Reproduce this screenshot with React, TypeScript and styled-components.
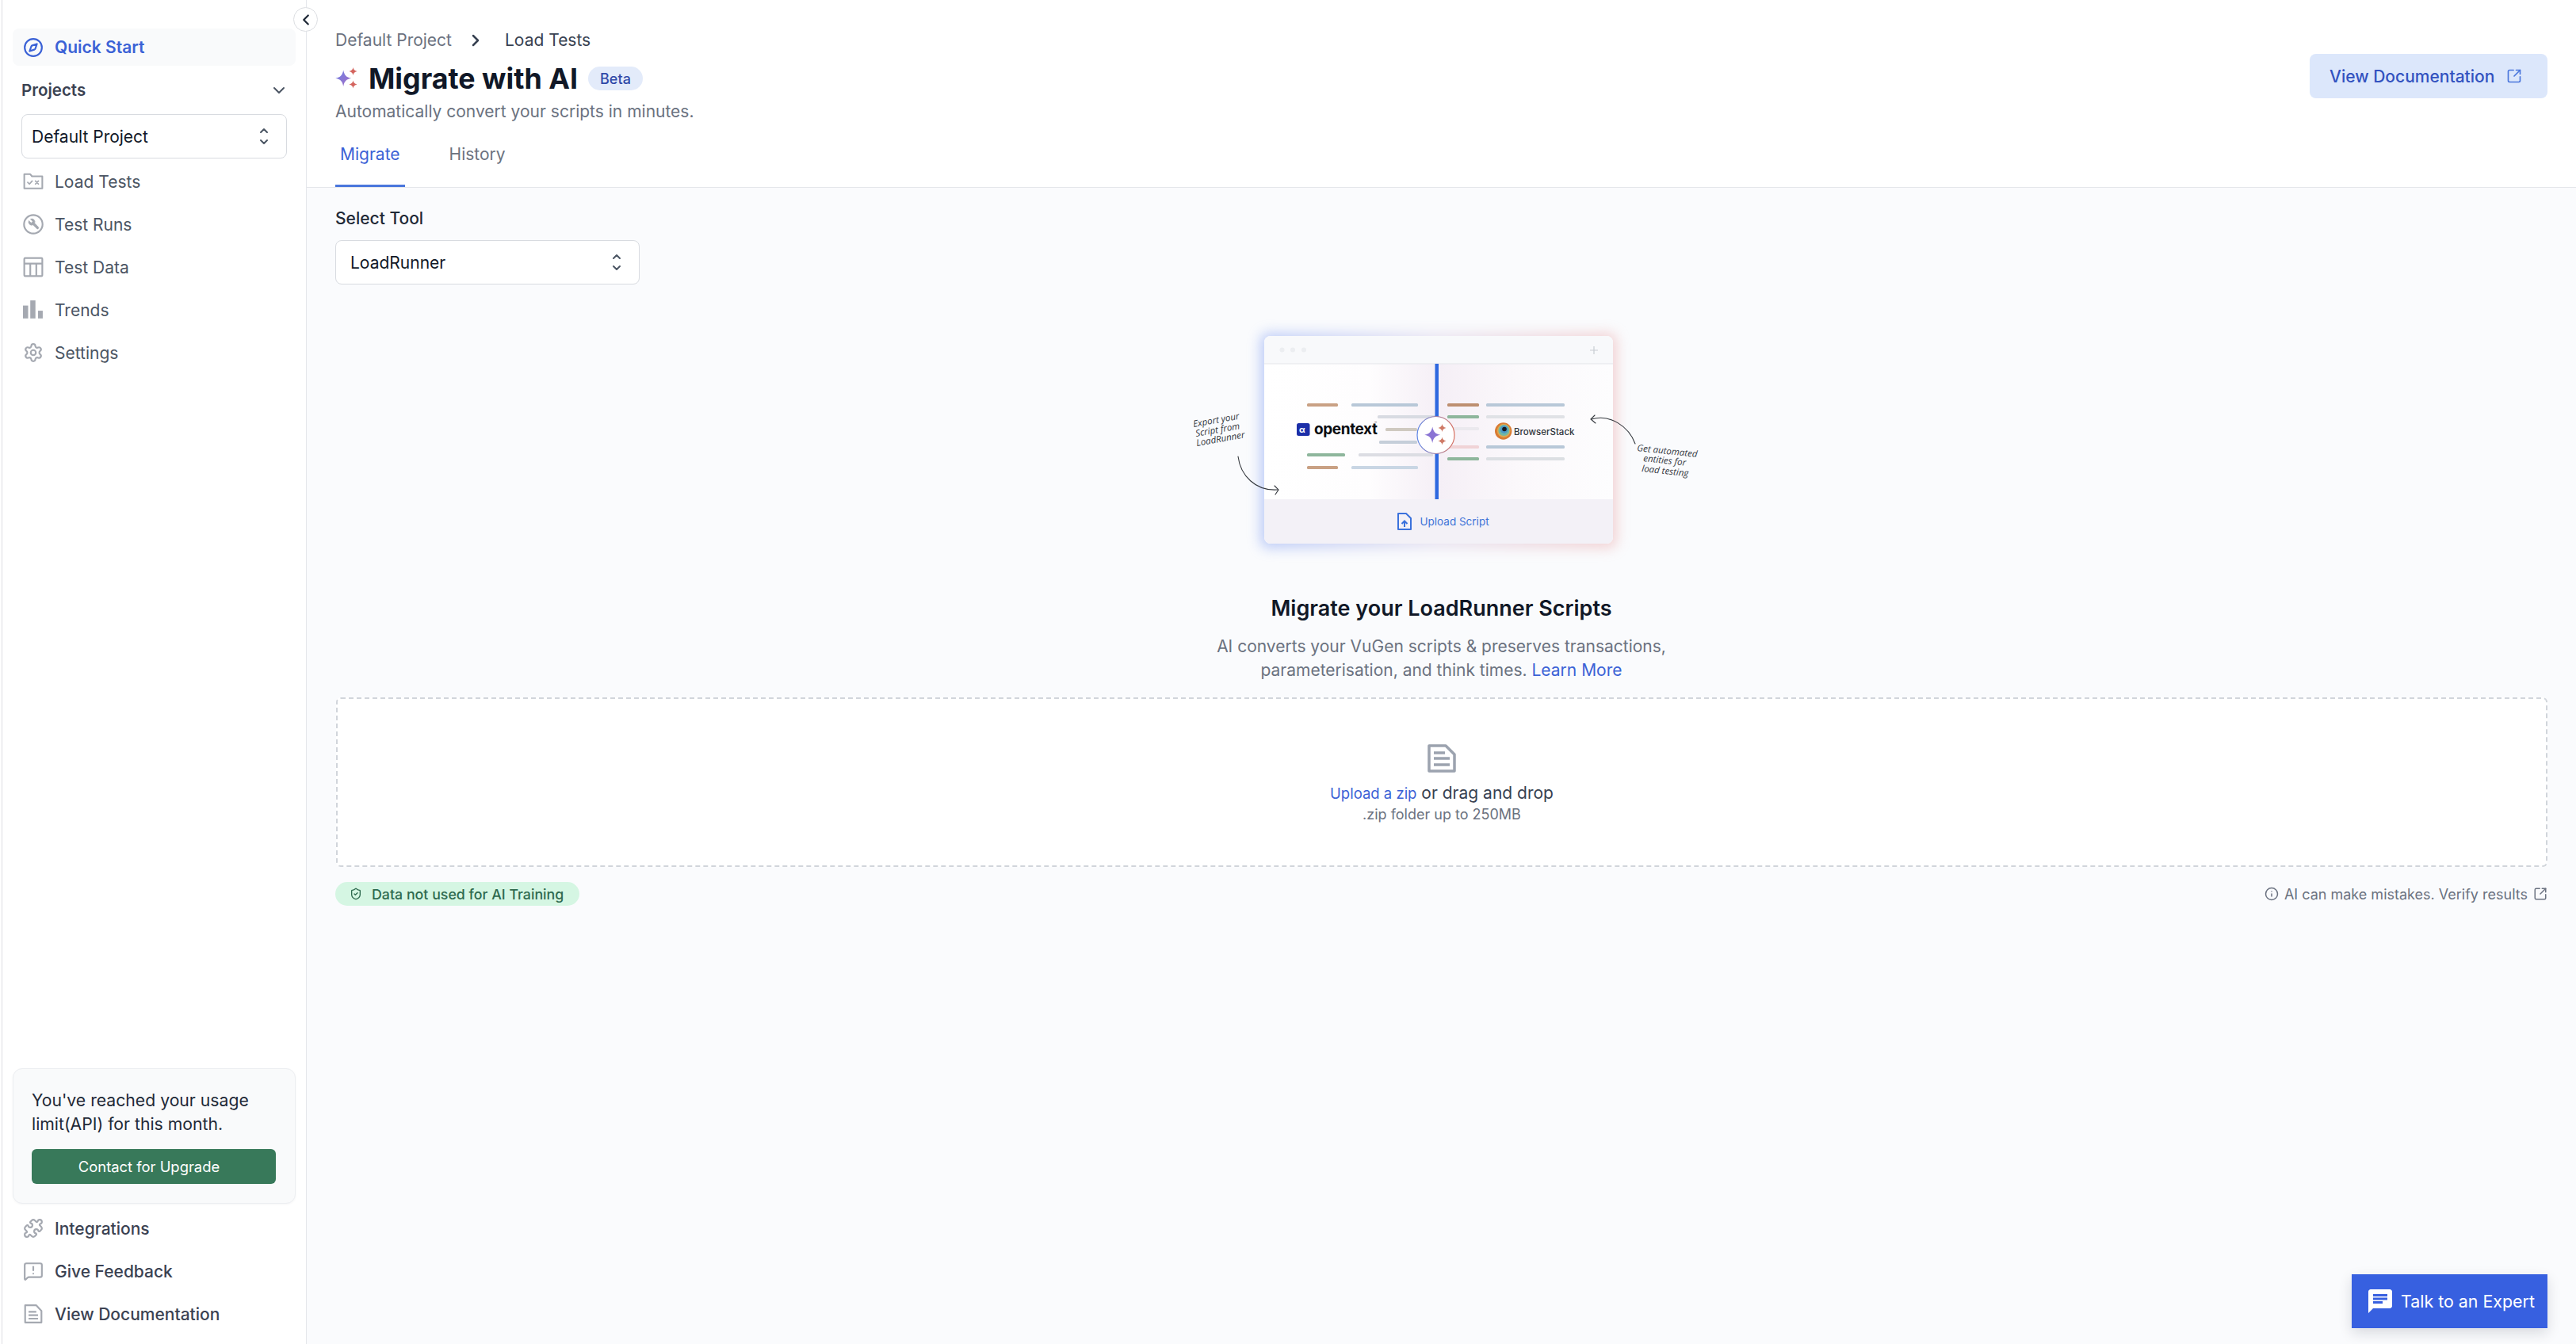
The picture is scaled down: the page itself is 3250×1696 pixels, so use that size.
import React from 'react';
import styled, { createGlobalStyle } from 'styled-components';
import {
    ChevronDown,
    ChevronLeft,
    ChevronRight,
    Compass,
    Info,
    MessageSquareWarning,
    Puzzle,
    Settings,
    ShieldCheck,
    SquareArrowOutUpRight,
} from 'lucide-react';
import { MdChat } from 'react-icons/md';

// STYLE
const GlobalStyle = createGlobalStyle`
    * {
        box-sizing: border-box;
    }
    body {
        margin: 0;
        font-family: Inter, 'Noto Sans', sans-serif;
        color: #111827;
        background: #fff;
    }
`;

const Page = styled.div`
    position: relative;
    display: grid;
    grid-template-columns: 387px 1fr;
    height: 100vh;
    overflow: hidden;
`;

const Sider = styled.aside`
    position: relative;
    display: flex;
    flex-direction: column;
    justify-content: space-between;
    margin-left: 2px;
    padding: 36px 13px 11px;
    border-left: 1px solid #dcdee2;
    border-right: 1px solid #e5e7eb;
    background: #fff;
`;

const CollapseButton = styled.button`
    position: absolute;
    top: 9px;
    right: -15px;
    z-index: 5;
    display: flex;
    align-items: center;
    justify-content: center;
    width: 31px;
    height: 31px;
    padding: 0;
    border: 1px solid #dcdee2;
    border-radius: 50%;
    background: #fff;
    color: #1f2937;
`;

const SiderGroup = styled.div`
    display: flex;
    flex-direction: column;
`;

const NavItem = styled.div<{ $active?: boolean; $strong?: boolean }>`
    display: flex;
    align-items: center;
    gap: 14px;
    height: ${(p) => (p.$active ? 47 : 54)}px;
    padding-left: 13px;
    border-radius: 8px;
    font-size: 21px;
    font-weight: ${(p) => (p.$active ? 600 : p.$strong ? 500 : 400)};
    color: ${(p) => (p.$active ? '#3b62d6' : p.$strong ? '#3b4252' : '#4b5563')};
    background: ${(p) => (p.$active ? '#f9fafb' : 'transparent')};
    svg {
        flex: none;
        width: 26px;
        height: 26px;
        color: ${(p) => (p.$active ? '#3b62d6' : '#a5a9b1')};
    }
`;

const ProjectsRow = styled.div`
    display: flex;
    align-items: center;
    justify-content: space-between;
    height: 61px;
    padding: 0 9px 0 11px;
    font-size: 20.5px;
    font-weight: 600;
    color: #3b4252;
    svg {
        width: 24px;
        height: 24px;
        color: #4b5563;
    }
`;

const SelectBox = styled.div<{ $width: number; $inset: number }>`
    display: flex;
    align-items: center;
    justify-content: space-between;
    width: ${(p) => p.$width}px;
    height: 56px;
    padding: 0 22px 0 ${(p) => p.$inset}px;
    border: 1.5px solid #d8dbe0;
    border-radius: 8px;
    background: #fff;
    font-size: 21px;
    color: #111827;
`;

const ProjectSelect = styled(SelectBox)`
    margin: 0 0 2px 11px;
`;

const UsageCard = styled.div`
    margin-bottom: 4px;
    padding: 24px 24px 24px 23px;
    border: 1.5px solid #eceef1;
    border-radius: 12px;
    background: #f9fafb;
    box-shadow: 0 1px 3px rgba(17, 24, 39, 0.04);
`;

const UsageText = styled.p`
    margin: 0 0 17px;
    font-size: 21.2px;
    line-height: 30px;
    color: #1f2937;
`;

const UpgradeButton = styled.button`
    display: block;
    width: 100%;
    height: 44px;
    padding: 0 12px 0 0;
    border: 0;
    border-radius: 6px;
    background: #38795a;
    color: #fff;
    font-family: inherit;
    font-size: 18.4px;
    font-weight: 400;
`;

const Main = styled.main`
    display: flex;
    flex-direction: column;
    min-width: 0;
    background: #fafbfd;
`;

const PageHeader = styled.header`
    display: flex;
    justify-content: space-between;
    height: 237px;
    padding: 36px 36px 0;
    border-bottom: 1.5px solid #e5e7eb;
    background: #fff;
`;

const HeaderLeft = styled.div`
    display: flex;
    flex-direction: column;
`;

const Breadcrumb = styled.div`
    display: flex;
    align-items: center;
    height: 30px;
    font-size: 21px;
    color: #6b7280;
    svg {
        width: 24px;
        height: 24px;
        margin: 0 25px 0 18px;
        color: #374151;
    }
`;

const Crumb = styled.span`
    color: #374151;
`;

const TitleRow = styled.div`
    display: flex;
    align-items: center;
    height: 44px;
    margin-top: 12px;
`;

const Title = styled.h1`
    margin: 0 13px 0 14px;
    font-size: 35.8px;
    font-weight: 700;
    line-height: 44px;
    color: #111827;
`;

const BetaPill = styled.span`
    display: flex;
    align-items: center;
    justify-content: center;
    width: 69px;
    height: 30px;
    border-radius: 15px;
    background: #e3ebfa;
    font-size: 18px;
    font-weight: 500;
    color: #3049a8;
`;

const Subtitle = styled.div`
    margin-top: 5px;
    font-size: 21px;
    line-height: 30px;
    color: #6b7280;
`;

const Tabs = styled.nav`
    display: flex;
    gap: 50px;
    margin-top: 8px;
`;

const Tab = styled.div<{ $active?: boolean }>`
    height: 72px;
    padding: 16px 6px 0;
    border-bottom: 3px solid ${(p) => (p.$active ? '#4a76dc' : 'transparent')};
    font-size: 21px;
    line-height: 30px;
    color: ${(p) => (p.$active ? '#3b62d6' : '#6b7280')};
`;

const DocsButton = styled.button`
    display: flex;
    align-items: center;
    gap: 15px;
    width: 300px;
    height: 56px;
    margin-top: 32px;
    padding: 0 0 0 25px;
    border: 0;
    border-radius: 8px;
    background: #dce7fb;
    color: #3252c0;
    font-family: inherit;
    font-size: 21px;
    font-weight: 500;
    white-space: nowrap;
    svg {
        flex: none;
        width: 20px;
        height: 20px;
        color: #4a76dc;
    }
`;

const Content = styled.section`
    display: flex;
    flex-direction: column;
    padding: 24px 36px 0;
`;

const FieldLabel = styled.label`
    margin-bottom: 12px;
    font-size: 21px;
    font-weight: 500;
    line-height: 30px;
    color: #1f2937;
`;

const Hero = styled.div`
    display: flex;
    flex-direction: column;
    align-items: center;
    margin-top: 41px;
`;

const HeroArt = styled.svg`
    display: block;
    width: 677px;
    height: 320px;
`;

const HeroTitle = styled.h2`
    margin: 30px 0 15px;
    font-size: 27px;
    font-weight: 600;
    line-height: 36px;
    color: #111827;
`;

const HeroText = styled.p`
    margin: 0;
    text-align: center;
    font-size: 21px;
    line-height: 30px;
    color: #6b7280;
`;

const TextLink = styled.a`
    color: #3b62d6;
`;

const DropZone = styled.div`
    display: flex;
    flex-direction: column;
    align-items: center;
    height: 214px;
    margin: 19px 0 19px 1px;
    padding-top: 57px;
    border: 2.5px dashed #d1d5db;
    border-radius: 6px;
    background: #fff;
`;

const DropLine = styled.div`
    margin-top: 11px;
    font-size: 21px;
    line-height: 30px;
    color: #374151;
    a {
        font-size: 18.5px;
    }
`;

const DropHint = styled.div`
    font-size: 18px;
    line-height: 24px;
    color: #6b7280;
`;

const NoticeRow = styled.div`
    display: flex;
    align-items: center;
    justify-content: space-between;
`;

const TrainingPill = styled.div`
    display: flex;
    align-items: center;
    gap: 12px;
    width: 308px;
    height: 30px;
    padding-left: 18px;
    border-radius: 15px;
    background: #d5f6e3;
    font-size: 17.8px;
    font-weight: 500;
    color: #2f6a4f;
    white-space: nowrap;
    svg {
        flex: none;
        width: 16px;
        height: 16px;
    }
`;

const Disclaimer = styled.div`
    display: flex;
    align-items: center;
    gap: 7px;
    font-size: 18px;
    color: #6b7280;
    svg {
        width: 18px;
        height: 18px;
    }
`;

const TalkButton = styled.button`
    position: absolute;
    right: 36px;
    bottom: 20px;
    display: flex;
    align-items: center;
    gap: 8px;
    width: 247px;
    height: 68px;
    padding: 0 0 0 18px;
    border: 0;
    background: #3760e0;
    color: #fff;
    font-family: inherit;
    font-size: 21.4px;
    white-space: nowrap;
    box-shadow: 0 6px 16px rgba(17, 24, 39, 0.14);
    svg {
        flex: none;
        width: 36px;
        height: 36px;
    }
`;

// ICONS
const UpDown = () => (
    <svg width="12" height="22" viewBox="0 0 12 22" fill="none" stroke="#4b5563" strokeWidth="2" strokeLinecap="round" strokeLinejoin="round">
        <path d="M2 6 6 2 10 6" />
        <path d="M2 16 6 20 10 16" />
    </svg>
);

const FolderChecks = () => (
    <svg viewBox="0 0 24 24" fill="none" stroke="currentColor" strokeWidth="1.9" strokeLinecap="round" strokeLinejoin="round">
        <path d="M1.5 20V3.5h7l2 2.5h12v14z" />
        <path d="M5.5 13l2 2 3.2-3.6" strokeWidth="1.6" />
        <path d="M14.5 11.5l3.5 3.5M18 11.5L14.5 15" strokeWidth="1.6" />
    </svg>
);

const WrenchCircle = () => (
    <svg viewBox="0 0 24 24" fill="none" stroke="currentColor" strokeWidth="2">
        <circle cx="12" cy="12" r="10.8" />
        <path
            d="M14.7 6.3a1 1 0 0 0 0 1.4l1.6 1.6a1 1 0 0 0 1.4 0l3.77-3.77a6 6 0 0 1-7.94 7.94l-6.91 6.91a2.12 2.12 0 0 1-3-3l6.91-6.91a6 6 0 0 1 7.94-7.94l-3.76 3.76z"
            transform="translate(19.5 5) scale(-0.62 0.62) translate(-1 -1)"
            fill="currentColor"
            strokeWidth="1"
        />
    </svg>
);

const TableGrid = () => (
    <svg viewBox="0 0 24 24" fill="none" stroke="currentColor" strokeWidth="2">
        <rect x="1.5" y="1.5" width="21" height="21" rx="1" />
        <path d="M1.5 8h21M8.5 8v14.5M15.5 8v14.5" />
    </svg>
);

const BarsIcon = () => (
    <svg viewBox="0 0 24 24" fill="currentColor">
        <rect x="0" y="7" width="6" height="15" />
        <rect x="8.5" y="1" width="6" height="21" />
        <rect x="17.5" y="13" width="5.5" height="9" />
    </svg>
);

const DocIcon = () => (
    <svg viewBox="0 0 24 24" fill="none" stroke="currentColor" strokeWidth="2" strokeLinejoin="round">
        <path d="M2.5 2h13l6 6.5V22h-19z" />
        <path d="M6.5 9.5h9M6.5 13.5h11M6.5 17.5h11" />
    </svg>
);

const BIG_STAR = 'M10.2 3.5c1.2 6.4 3.6 9 10 10.2-6.4 1.2-8.8 3.8-10 10.2-1.2-6.4-3.6-9-10-10.2 6.4-1.2 8.8-3.8 10-10.2z';
const TOP_STAR = 'M22.5 0c.6 3 1.8 4.2 5 5-3.2.8-4.4 2-5 5-.6-3-1.8-4.2-5-5 3.2-.8 4.4-2 5-5z';
const LOW_STAR = 'M22.5 16.5c.6 3 1.8 4.2 5 5-3.2.8-4.4 2-5 5-.6-3-1.8-4.2-5-5 3.2-.8 4.4-2 5-5z';

const Sparkle = () => (
    <svg width="28" height="28" viewBox="0 0 28 28">
        <defs>
            <linearGradient id="sparkleMain" x1="0" y1="0" x2="1" y2="1">
                <stop offset="0" stopColor="#6d83e6" />
                <stop offset="1" stopColor="#a56cc4" />
            </linearGradient>
        </defs>
        <path d={BIG_STAR} fill="url(#sparkleMain)" />
        <path d={TOP_STAR} fill="#d4655f" />
        <path d={LOW_STAR} fill="#d4655f" />
    </svg>
);

const BigFile = () => (
    <svg width="36" height="36" viewBox="0 0 36 36" fill="none" stroke="#9ca3af" strokeWidth="3.5" strokeLinejoin="round">
        <path d="M2 2h21l11 11v21H2z" />
        <path d="M8 11h14M8 18h20M8 26h20" />
    </svg>
);

// One code line of the illustration
const artLines: [number, number, number, string][] = [
    [1649, 1688, 511, '#c9a184'],
    [1705, 1789, 511, '#b8c8d8'],
    [1738, 1812, 526, '#d8dbe2'],
    [1748, 1788, 542, '#cfc9c0'],
    [1740, 1788, 558, '#c5ced9'],
    [1649, 1697, 574, '#8eb69c'],
    [1714, 1808, 574, '#dcdde3'],
    [1649, 1688, 590, '#c9a184'],
    [1705, 1789, 590, '#c9d6e4'],
    [1826, 1866, 511, '#bd8f70'],
    [1875, 1974, 511, '#b8c8d8'],
    [1826, 1866, 526, '#8eb69c'],
    [1875, 1974, 526, '#e0e2e6'],
    [1826, 1866, 541, '#ebe9ee'],
    [1826, 1866, 564, '#f0d3d6'],
    [1875, 1974, 564, '#b8c8d8'],
    [1826, 1866, 579, '#8eb69c'],
    [1875, 1974, 579, '#dcdfe3'],
];

const Illustration = () => (
    <HeroArt viewBox="1480 400 677 320">
        <defs>
            <linearGradient id="glow" x1="0" y1="0" x2="1" y2="0">
                <stop offset="0" stopColor="#7f9df2" />
                <stop offset="0.5" stopColor="#d9cfe6" />
                <stop offset="1" stopColor="#eba9a9" />
            </linearGradient>
            <linearGradient id="pane" x1="0" y1="0" x2="1" y2="0">
                <stop offset="0" stopColor="#fff" />
                <stop offset="0.3" stopColor="#fefdfe" />
                <stop offset="0.5" stopColor="#f5eff6" />
                <stop offset="0.72" stopColor="#fbf8fb" />
                <stop offset="1" stopColor="#fdfdfe" />
            </linearGradient>
            <linearGradient id="ring" x1="0" y1="0" x2="1" y2="0">
                <stop offset="0" stopColor="#5f86e6" />
                <stop offset="1" stopColor="#d8705f" />
            </linearGradient>
            <filter id="soft" x="-20%" y="-20%" width="140%" height="140%">
                <feGaussianBlur stdDeviation="8" />
            </filter>
            <filter id="tiny">
                <feGaussianBlur stdDeviation="0.5" />
            </filter>
            <clipPath id="win">
                <rect x="1595" y="424" width="440" height="262" rx="8" />
            </clipPath>
        </defs>
        <rect x="1590" y="420" width="450" height="272" rx="10" fill="url(#glow)" filter="url(#soft)" opacity="0.5" />
        <g clipPath="url(#win)">
            <rect x="1595" y="424" width="440" height="262" fill="#fff" />
            <rect x="1595" y="424" width="440" height="35" fill="#f8f9fb" />
            <rect x="1595" y="459" width="440" height="171" fill="url(#pane)" />
            <rect x="1595" y="630" width="440" height="56" fill="#f3f1f7" />
            <rect x="1595" y="458.5" width="440" height="1" fill="#e3e5ea" />
        </g>
        <g fill="#eceef1">
            <circle cx="1617.5" cy="441.5" r="3" />
            <circle cx="1631" cy="441.5" r="3" />
            <circle cx="1645" cy="441.5" r="3" />
        </g>
        <path d="M2011 437v10M2006 442h10" stroke="#c9cdd3" strokeWidth="1.2" />
        <g filter="url(#tiny)">
            {artLines.map(([x1, x2, y, color]) => (
                <rect key={`${x1}-${y}`} x={x1} y={y - 2} width={x2 - x1} height={4} rx={1.5} fill={color} />
            ))}
            <rect x="1810.5" y="459" width="4.5" height="171" fill="#2f68df" />
        </g>
        <circle cx="1811.5" cy="549" r="23.5" fill="#fff" stroke="url(#ring)" strokeWidth="1.2" />
        <g transform="translate(1797 535)">
            <path d={BIG_STAR} fill="#8a74d4" />
            <path d={TOP_STAR} fill="#cf7a66" />
            <path d={LOW_STAR} fill="#cf7a66" />
        </g>
        <rect x="1636" y="534" width="16.5" height="16" rx="2.5" fill="#1c2fa8" />
        <text x="1639" y="546" fontFamily="Inter" fontSize="11" fontWeight="700" fill="#fff">α</text>
        <text x="1658" y="547.5" fontFamily="Inter" fontSize="19" fontWeight="700" letterSpacing="-0.4" fill="#0b0d12">opentext</text>
        <text x="1734" y="536" fontFamily="Inter" fontSize="5" fill="#0b0d12">™</text>
        <circle cx="1896.7" cy="544" r="10.7" fill="#d97b33" />
        <circle cx="1897.2" cy="543.5" r="8.4" fill="#dfa84f" />
        <circle cx="1897.4" cy="543" r="7" fill="#72b8a4" />
        <circle cx="1897.7" cy="542" r="4.9" fill="#4d97c6" />
        <circle cx="1898" cy="541.5" r="2.8" fill="#14171c" />
        <text x="1910" y="549" fontFamily="Inter" fontSize="11.5" fontWeight="500" fill="#30343a">BrowserStack</text>
        <path d="M1764 648h10l6 6v14h-16z" fill="none" stroke="#3b72dc" strokeWidth="2" strokeLinejoin="round" />
        <path d="M1772 665v-7M1768.5 661l3.5-3.5 3.5 3.5" fill="none" stroke="#3b72dc" strokeWidth="2" />
        <text x="1791.5" y="663" fontFamily="Inter" fontSize="13.5" fill="#3e74d8">Upload Script</text>
        <g fontFamily="'Open Sans'" fontStyle="italic" fontSize="11.5" fill="#33373d">
            <text transform="translate(1506 539) rotate(-10)">Export your</text>
            <text transform="translate(1509 551) rotate(-10)">Script from</text>
            <text transform="translate(1510 563) rotate(-10)">LoadRunner</text>
            <text transform="translate(2065 569) rotate(6)">Get automated</text>
            <text transform="translate(2073 582) rotate(6)">entities for</text>
            <text transform="translate(2071 595) rotate(6)">load testing</text>
        </g>
        <g fill="none" stroke="#33373d" strokeWidth="1.1" strokeLinecap="round">
            <path d="M1562 576c3 24 22 44 50 42" />
            <path d="M1608 613l5 5-4 6" />
            <path d="M2063 560c-8-22-32-38-55-31" />
            <path d="M2012 524l-5 5 6 5" />
        </g>
    </HeroArt>
);

const App: React.FC = () => (
    <Page>
        <GlobalStyle />
        {/* SECTION :: LEFT BAR */}
        <Sider>
            <CollapseButton>
                <ChevronLeft size={22} strokeWidth={2.5} />
            </CollapseButton>
            <SiderGroup>
                <NavItem $active>
                    <Compass />
                    Quick Start
                </NavItem>
                <ProjectsRow>
                    Projects
                    <ChevronDown />
                </ProjectsRow>
                <ProjectSelect $width={335} $inset={12}>
                    Default Project
                    <UpDown />
                </ProjectSelect>
                <NavItem>
                    <FolderChecks />
                    Load Tests
                </NavItem>
                <NavItem>
                    <WrenchCircle />
                    Test Runs
                </NavItem>
                <NavItem>
                    <TableGrid />
                    Test Data
                </NavItem>
                <NavItem>
                    <BarsIcon />
                    Trends
                </NavItem>
                <NavItem>
                    <Settings />
                    Settings
                </NavItem>
            </SiderGroup>
            <SiderGroup>
                <UsageCard>
                    <UsageText>You've reached your usage limit(API) for this month.</UsageText>
                    <UpgradeButton>Contact for Upgrade</UpgradeButton>
                </UsageCard>
                <NavItem $strong>
                    <Puzzle />
                    Integrations
                </NavItem>
                <NavItem $strong>
                    <MessageSquareWarning />
                    Give Feedback
                </NavItem>
                <NavItem $strong>
                    <DocIcon />
                    View Documentation
                </NavItem>
            </SiderGroup>
        </Sider>

        <Main>
            {/* SECTION :: HEADER */}
            <PageHeader>
                <HeaderLeft>
                    <Breadcrumb>
                        Default Project
                        <ChevronRight strokeWidth={2.5} />
                        <Crumb>Load Tests</Crumb>
                    </Breadcrumb>
                    <TitleRow>
                        <Sparkle />
                        <Title>Migrate with AI</Title>
                        <BetaPill>Beta</BetaPill>
                    </TitleRow>
                    <Subtitle>Automatically convert your scripts in minutes.</Subtitle>
                    <Tabs>
                        <Tab $active>Migrate</Tab>
                        <Tab>History</Tab>
                    </Tabs>
                </HeaderLeft>
                <DocsButton>
                    View Documentation
                    <SquareArrowOutUpRight />
                </DocsButton>
            </PageHeader>

            {/* SECTION :: CONTENT */}
            <Content>
                <FieldLabel>Select Tool</FieldLabel>
                <SelectBox $width={384} $inset={18}>
                    LoadRunner
                    <UpDown />
                </SelectBox>
                <Hero>
                    <Illustration />
                    <HeroTitle>Migrate your LoadRunner Scripts</HeroTitle>
                    <HeroText>
                        AI converts your VuGen scripts &amp; preserves transactions,
                        <br />
                        parameterisation, and think times. <TextLink>Learn More</TextLink>
                    </HeroText>
                </Hero>
                <DropZone>
                    <BigFile />
                    <DropLine>
                        <TextLink>Upload a zip</TextLink> or drag and drop
                    </DropLine>
                    <DropHint>.zip folder up to 250MB</DropHint>
                </DropZone>
                <NoticeRow>
                    <TrainingPill>
                        <ShieldCheck />
                        Data not used for AI Training
                    </TrainingPill>
                    <Disclaimer>
                        <Info />
                        AI can make mistakes. Verify results
                        <SquareArrowOutUpRight />
                    </Disclaimer>
                </NoticeRow>
            </Content>
        </Main>

        <TalkButton>
            <MdChat />
            Talk to an Expert
        </TalkButton>
    </Page>
);

export default App;
